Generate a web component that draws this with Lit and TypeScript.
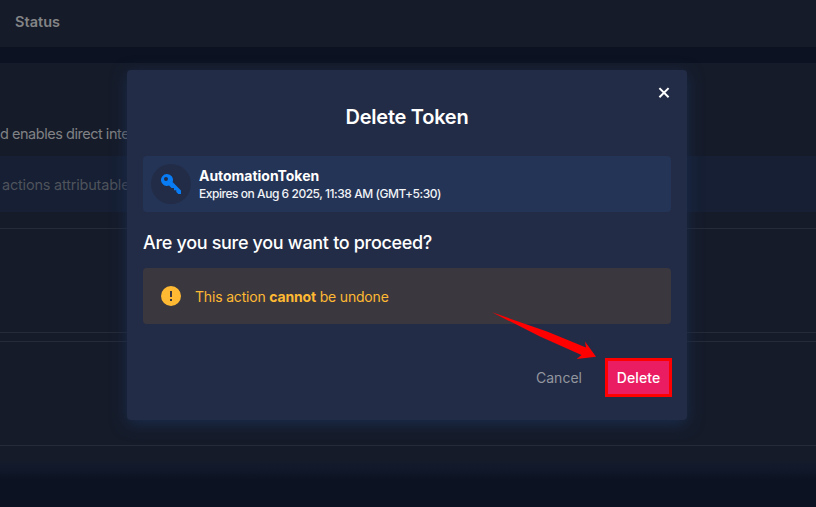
import { LitElement, html, css } from "lit";
import { customElement } from "lit/decorators.js";

@customElement("token-page")
class TokenPage extends LitElement {
  static styles = css`
    :host { display: flex; flex-direction: column; height: 507px; background: #0c1221; overflow: hidden; white-space: nowrap; }
    .head { box-sizing: border-box; height: 47px; padding: 12px 15px 0; background: #151b29; color: #838486; font-size: 14.5px; font-weight: 600; line-height: 20px; }
    .status { letter-spacing: 0.03px; }
    .card { display: flex; flex-direction: column; flex: none; box-sizing: border-box; height: 397px; margin-top: 16px; background: #151b29; }
    .fade { height: 20px; background: linear-gradient(#151b29, #11192b 40%, #0c1221); }
    .desc { height: 20px; margin-top: 60px; line-height: 22px; font-size: 14.5px; color: #818285; letter-spacing: -0.47px; }
    .note { box-sizing: border-box; height: 56px; margin-top: 13px; padding: 18px 2px; line-height: 22px; background: #161f33; font-size: 14.5px; color: #4e535c; letter-spacing: -0.2px; }
    .group { box-sizing: border-box; height: 105px; border: solid #252b38; border-width: 1px 0; }
    .first { margin-top: 16px; }
    .second { margin-top: 8px; }
  `;
  render() {
    return html`
      <div class="head"><span class="status">Status</span></div>
      <div class="card">
        <div class="desc">d enables direct integration</div>
        <div class="note">actions attributable to</div>
        <div class="group first"></div>
        <div class="group second"></div>
      </div>
      <div class="fade"></div>`;
  }
}

@customElement("delete-dialog")
class DeleteDialog extends LitElement {
  static styles = css`
    :host { display: flex; flex-direction: column; box-sizing: border-box; width: 560px; height: 350px; padding: 16px; border-radius: 4px; background: #232c46; color: #fff; box-shadow: 0 4px 16px #1a2c4c; white-space: nowrap; }
    .top { display: flex; justify-content: flex-end; height: 14px; padding-right: 1px; }
    .close { display: block; width: 12px; height: 14px; }
    h1 { margin: 3px 0 0; height: 28px; line-height: 28px; text-align: center; font-size: 20px; font-weight: 600; letter-spacing: -0.25px; }
    .token { display: flex; align-items: center; box-sizing: border-box; height: 56px; margin-top: 25px; padding: 0 8px; gap: 8px; border-radius: 4px; background: #243456; }
    .badge { display: grid; place-items: center; width: 40px; height: 40px; border-radius: 50%; background: #232c46; }
    .name { line-height: 18px; margin-top: 1px; font-size: 14px; font-weight: 700; letter-spacing: -0.03px; }
    .expiry { line-height: 17px; font-size: 12px; font-weight: 500; color: #f1f3f6; letter-spacing: -0.46px; }
    h2 { margin: 18px 0 0; height: 26px; line-height: 26px; font-size: 18px; font-weight: 500; letter-spacing: -0.32px; }
    .warn { display: flex; align-items: center; box-sizing: border-box; height: 56px; margin-top: 12px; padding: 0 16px; gap: 12px; border-radius: 4px; background: #3a383e; color: #ffb933; font-size: 14px; }
    .undone { letter-spacing: -0.18px; line-height: 20px; padding-top: 1px; }
    .actions { display: flex; justify-content: flex-end; align-items: center; height: 39px; margin: 34px -1px 0 0; font-size: 14px; }
    button { font: inherit; padding: 0; border: 0; background: none; }
    .cancel { width: 46px; margin-right: 23px; color: #92969f; letter-spacing: 0; }
    .delete { box-sizing: border-box; width: 67px; height: 39px; border: 3px solid #f00; background: #eb1d62; color: #fff; font-weight: 500; letter-spacing: 0.08px; }
  `;
  render() {
    return html`
      <div class="top">
        <svg class="close" viewBox="0 0 12 14" fill="none" stroke="#fff" stroke-width="2"><path d="M1.400 2.100L10.600 11.300M10.600 2.100L1.400 11.300"/></svg>
      </div>
      <h1><span>Delete Token</span></h1>
      <div class="token">
        <div class="badge">
          <svg width="20" height="20" viewBox="0 0 20 20" fill="#087cf5"><path fill-rule="evenodd" d="M6 0A6 6 0 1 0 8.100 11.600L10.500 14H13V16.300H15.300V18L17.300 20H20V16.400L11.600 8.100A6 6 0 0 0 6 0ZM5 3A2 2 0 1 1 5 7A2 2 0 0 1 5 3Z"/></svg>
        </div>
        <div>
          <div class="name"><span>AutomationToken</span></div>
          <div class="expiry"><span>Expires on Aug 6 2025, 11:38 AM (GMT+5:30)</span></div>
        </div>
      </div>
      <h2><span>Are you sure you want to proceed?</span></h2>
      <div class="warn">
        <svg width="24" height="24" viewBox="0 0 24 24" fill="#ffb933"><path fill-rule="evenodd" d="M12 2a10 10 0 1 0 0 20a10 10 0 0 0 0-20ZM11 7h2v6h-2ZM11 15h2v2h-2Z"/></svg>
        <span class="undone">This action <b>cannot</b> be undone</span>
      </div>
      <div class="actions">
        <button class="cancel">Cancel</button>
        <button class="delete">Delete</button>
      </div>`;
  }
}

@customElement("app-root")
class AppRoot extends LitElement {
  static styles = css`
    :host { display: block; position: relative; width: 816px; height: 507px; overflow: hidden; font-family: Inter, "Noto Sans", sans-serif; }
    delete-dialog { position: absolute; left: 127px; top: 70px; }
    .arrow { position: absolute; left: 490px; top: 308px; pointer-events: none; }
  `;
  render() {
    return html`
      <token-page></token-page>
      <delete-dialog></delete-dialog>
      <svg class="arrow" width="110" height="56" viewBox="0 0 110 56" fill="#f00"><path d="M2 4.300L57 23.500L96 39.500L95 33.500L106 48.800L86.700 51L91.500 47L50 28.500Z"/></svg>`;
  }
}
